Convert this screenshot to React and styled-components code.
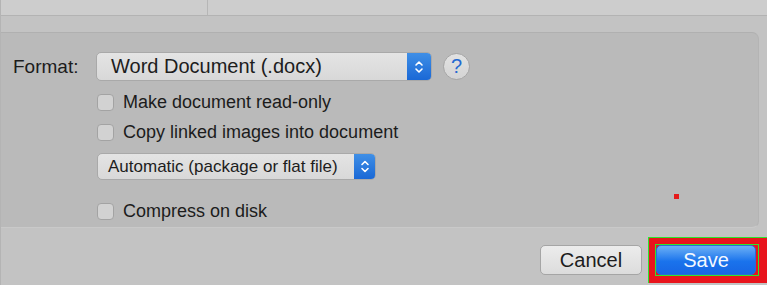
import React from 'react';
import styled, { createGlobalStyle } from 'styled-components';

const Global = createGlobalStyle`
  html, body {
    margin: 0;
    padding: 0;
    background: #c3c3c3;
    overflow: hidden;
  }
  body {
    font-family: "Liberation Sans", Arial, sans-serif;
    color: #1e1e1e;
  }
`;

const Window = styled.div`
  width: 767px;
  height: 285px;
  display: flex;
  flex-direction: column;
  border-left: 1px solid #b4b4b4;
  box-sizing: border-box;
`;

const TopBar = styled.div`
  height: 15px;
  display: grid;
  grid-template-columns: 207px 1fr;
  background: #cdcdcd;
  border-bottom: 1px solid #b3b3b3;
`;

const TopCell = styled.div`
  border-right: ${({ divider }) => (divider ? '1px solid #b6b6b6' : 'none')};
`;

const Body = styled.div`
  padding: 16px 8px 0 0;
`;

const Panel = styled.div`
  position: relative;
  height: 196px;
  box-sizing: border-box;
  background: #bababa;
  border-top: 1px solid #b0b0b0;
  border-right: 1px solid #b4b4b4;
  border-bottom: 1px solid #c9c9c9;
  border-radius: 0 7px 7px 0;
  padding: 19px 0 0 12px;
`;

const FormatRow = styled.div`
  display: flex;
  align-items: center;
  height: 29px;
`;

const Label = styled.span`
  width: 83px;
  font-size: 19px;
  color: #1c1c1c;
`;

const Popup = styled.div`
  display: flex;
  width: ${({ w }) => w}px;
  height: ${({ h }) => h}px;
  box-sizing: border-box;
  border-radius: 5px;
  border: 1px solid #a9a9a9;
  background: linear-gradient(#e4e4e4, #d8d8d8);
  overflow: hidden;
`;

const PopupText = styled.span`
  flex: 1;
  display: flex;
  align-items: center;
  padding-left: ${({ pad }) => pad}px;
  font-size: ${({ size }) => size}px;
  color: #1d1d1d;
  white-space: nowrap;
`;

const Stepper = styled.span`
  width: ${({ w }) => w}px;
  flex-shrink: 0;
  display: flex;
  align-items: center;
  justify-content: center;
  background: linear-gradient(#3f8fe6, #1a68d6);
`;

const Help = styled.span`
  margin-left: 11px;
  width: 27px;
  height: 27px;
  border-radius: 50%;
  box-sizing: border-box;
  border: 1px solid #a6a6a6;
  background: linear-gradient(#e2e2e2, #d4d4d4);
  display: flex;
  align-items: center;
  justify-content: center;
  font-size: 20px;
  color: #2469d2;
`;

const Options = styled.div`
  margin-left: 84px;
  display: flex;
  flex-direction: column;
`;

const CheckRow = styled.label`
  display: flex;
  align-items: center;
  height: 18px;
  margin-top: ${({ top }) => top}px;
  font-size: 18px;
  color: #1c1c1c;
`;

const Box = styled.span`
  width: 17px;
  height: 17px;
  flex-shrink: 0;
  box-sizing: border-box;
  border: 1px solid #a3a3a3;
  border-radius: 4px;
  background: #d2d2d2;
  margin-right: 9px;
`;

const Sub = styled.div`
  margin-top: ${({ top }) => top}px;
`;

const Dot = styled.span`
  position: absolute;
  left: 673px;
  top: 161px;
  width: 5px;
  height: 5px;
  background: #e51b1b;
`;

const Footer = styled.div`
  display: flex;
  justify-content: flex-end;
  align-items: flex-start;
  padding-top: 9px;
  margin-right: -8px;
`;

const Button = styled.button`
  width: ${({ w }) => w}px;
  height: 30px;
  border-radius: 5px;
  font-family: "Liberation Sans", Arial, sans-serif;
  font-size: 20px;
  padding: 0;
  box-sizing: border-box;
  border: 1px solid ${({ primary }) => (primary ? '#2a6fd0' : '#a5a5a5')};
  color: ${({ primary }) => (primary ? '#f4f8ff' : '#1c1c1c')};
  background: ${({ primary }) =>
    primary ? 'linear-gradient(#6cb0f6, #1a73ec 55%, #1766e4)' : 'linear-gradient(#ececec, #dcdcdc)'};
`;

const CancelWrap = styled.div`
  margin-top: 8px;
  margin-right: 6px;
`;

const Highlight = styled.div`
  border: 1px solid #2ee52e;
  border-right: none;
  border-bottom: none;
  background: #e8141c;
  padding: 6px 0 8px 6px;
  width: 119px;
  height: 46px;
  box-sizing: border-box;
`;

const Inner = styled.div`
  border: 1px solid #2ee52e;
  width: 102px;
  display: flex;
`;

const Chevrons = ({ h }) => (
  <svg width="10" height={h} viewBox="0 0 10 16">
    <path d="M2 6 L5 3 L8 6" stroke="#fff" strokeWidth="1.6" fill="none" strokeLinecap="round" strokeLinejoin="round" />
    <path d="M2 10 L5 13 L8 10" stroke="#fff" strokeWidth="1.6" fill="none" strokeLinecap="round" strokeLinejoin="round" />
  </svg>
);

export default function App() {
  return (
    <>
      <Global />
      <Window>
        <TopBar>
          <TopCell divider />
          <TopCell />
        </TopBar>
        <Body>
          <Panel>
            <FormatRow>
              <Label>Format:</Label>
              <Popup w={336} h={29}>
                <PopupText pad={14} size={20}>Word Document (.docx)</PopupText>
                <Stepper w={24}><Chevrons h={18} /></Stepper>
              </Popup>
              <Help>?</Help>
            </FormatRow>
            <Options>
              <CheckRow top={12}><Box />Make document read-only</CheckRow>
              <CheckRow top={12}><Box />Copy linked images into document</CheckRow>
              <Sub top={12}>
                <Popup w={279} h={27}>
                  <PopupText pad={10} size={17}>Automatic (package or flat file)</PopupText>
                  <Stepper w={21}><Chevrons h={17} /></Stepper>
                </Popup>
              </Sub>
              <CheckRow top={22}><Box />Compress on disk</CheckRow>
            </Options>
            <Dot />
          </Panel>
          <Footer>
            <CancelWrap>
              <Button w={102}>Cancel</Button>
            </CancelWrap>
            <Highlight>
              <Inner>
                <Button primary w={100}>Save</Button>
              </Inner>
            </Highlight>
          </Footer>
        </Body>
      </Window>
    </>
  );
}
